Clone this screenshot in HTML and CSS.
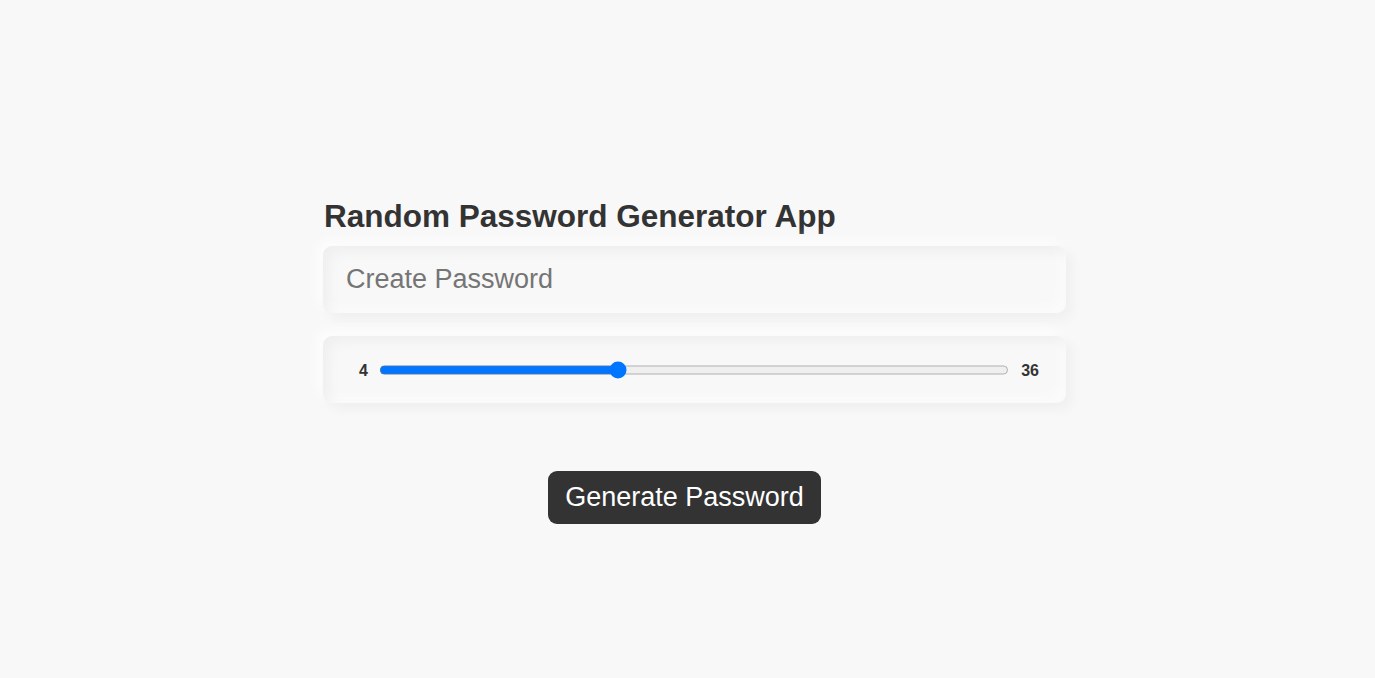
FILE: index.html
```html
<!DOCTYPE html>
<html lang="en">
<head>
<meta charset="utf-8">
<title>Random Password Generator App</title>
<link rel="stylesheet" href="styles.css">
</head>
<body>
<main class="container">
  <h1 class="title">Random Password Generator App</h1>
  <input class="panel password" type="text" placeholder="Create Password">
  <div class="panel length">
    <span class="min">4</span>
    <input class="slider" type="range" min="4" max="36" value="16">
    <span class="max">36</span>
  </div>
  <button class="generate" type="button">Generate Password</button>
</main>
</body>
</html>
```
FILE: styles.css
```css
* { box-sizing: border-box; }
body {
  margin: 0;
  background: #f8f8f8;
  color: #333;
  font-family: "Liberation Sans", Arial, sans-serif;
}
.container {
  width: 743px;
  margin-left: 323px;
  padding-top: 198px;
  display: flex;
  flex-direction: column;
}
.title {
  margin: 0 0 12px;
  padding-left: 1px;
  font-size: 31.5px;
  line-height: 36px;
  font-weight: 700;
  white-space: nowrap;
}
.panel {
  width: 743px;
  height: 67px;
  border: 0;
  border-radius: 9px;
  background: #f8f8f8;
  box-shadow: inset 6px 6px 13px rgba(0, 0, 0, 0.04), inset -6px -6px 13px rgba(255, 255, 255, 0.5), 6px 6px 13px rgba(0, 0, 0, 0.04), -6px -6px 13px rgba(255, 255, 255, 0.75);
}
.password {
  margin-bottom: 23px;
  padding: 0 23px;
  font: 27px "Liberation Sans", Arial, sans-serif;
}
.password::placeholder { color: #757575; }
.length {
  display: flex;
  align-items: center;
  padding: 0 27px 0 36px;
  font-size: 16px;
  font-weight: 700;
}
.min, .max { padding-top: 2px; }
.slider {
  zoom: 1.125;
  flex: 1;
  min-width: 0;
  height: 16px;
  margin: 1px 10.5px 0 10.2px;
  accent-color: #0075ff;
}
.generate {
  align-self: flex-start;
  width: 273px;
  height: 53px;
  margin: 68px 0 0 225px;
  padding: 0;
  border: 0;
  border-radius: 9px;
  background: #333;
  color: #fff;
  font: 27px "Liberation Sans", Arial, sans-serif;
  white-space: nowrap;
}
```
